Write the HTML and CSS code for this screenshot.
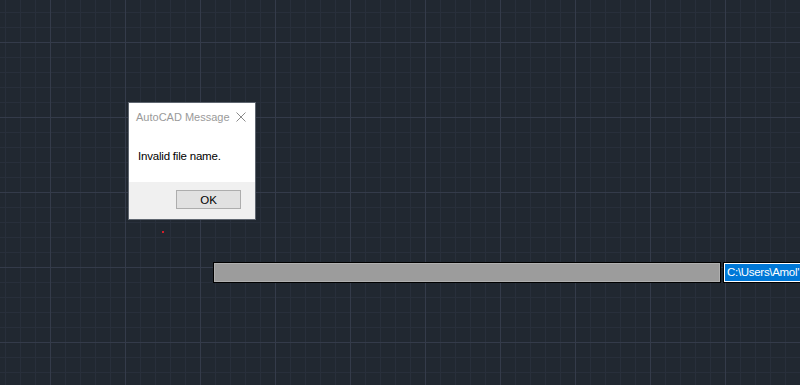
FILE: index.html
```html
<!DOCTYPE html>
<html>
<head>
<meta charset="utf-8">
<title>AutoCAD</title>
<link rel="stylesheet" href="styles.css">
</head>
<body>
<div class="canvas">
	<span class="dot"></span>

	<div class="msgbox">
		<div class="msgbox-title">
			<span class="caption">AutoCAD Message</span>
			<svg class="close" width="10" height="10" viewBox="0 0 10 10"><path d="M0.5 0.5L9.5 9.5M9.5 0.5L0.5 9.5" stroke="#8a8a8a" stroke-width="1" fill="none"/></svg>
		</div>
		<div class="msgbox-body">Invalid file name.</div>
		<div class="msgbox-foot">
			<button class="btn">OK</button>
		</div>
	</div>

	<div class="progress"></div>
	<div class="path"><span class="sel">C:\Users\Amol'</span></div>
</div>
</body>
</html>
```

FILE: styles.css
```css
*{margin:0; padding:0; box-sizing:border-box;}
html,body{width:800px; height:385px; overflow:hidden;}
body{background:#212831; font-family:"Liberation Sans", Arial, sans-serif; font-size:12px;}

.canvas{position:relative; width:800px; height:385px;
	background-image:
		linear-gradient(to right, #343b4a 1px, transparent 1px),
		linear-gradient(to bottom, #343b4a 1px, transparent 1px),
		linear-gradient(to right, #282f3b 1px, transparent 1px),
		linear-gradient(to bottom, #282f3b 1px, transparent 1px);
	background-size:75px 75px, 75px 75px, 15px 15px, 15px 15px;
	background-position:50px 0, 0 42px, 5px 0, 0 12px;
}

.dot{position:absolute; left:162px; top:231px; width:2px; height:2px; background:#d0202a;}

.msgbox{position:absolute; left:128px; top:102px; width:128px; height:118px; background:#fff; border:1px solid #5f6670; display:flex; flex-direction:column;}
.msgbox-title{height:28px; display:flex; align-items:center; justify-content:space-between; padding:0 9px 0 7px; color:#9a9a9a; font-size:11px; white-space:nowrap;}
.close{display:block; flex:none;}
.msgbox-body{flex:1; padding:19px 0 0 9px; color:#000; font-size:11.5px; letter-spacing:-0.2px; white-space:nowrap;}
.msgbox-foot{height:37px; background:#f0f0f0; display:flex; justify-content:flex-end; align-items:center; padding:0 14px 2px 0;}
.btn{width:65px; height:19px; background:#e1e1e1; border:1px solid #adadad; font-family:inherit; font-size:11.5px; color:#000;}

.progress{position:absolute; left:213px; top:262px; width:508px; height:21px; background:#9c9c9c; border:1px solid #000; box-shadow:inset 0 0 0 1px #b0b0b0;}
.path{position:absolute; left:723px; top:262px; width:80px; height:21px; border:1px solid #000; background:#fff; padding:1px; overflow:hidden; white-space:nowrap;}
.sel{display:block; height:17px; line-height:17px; background:#0078d7; color:#fff; padding-left:2px; font-size:11.5px; letter-spacing:-0.3px;}
```
